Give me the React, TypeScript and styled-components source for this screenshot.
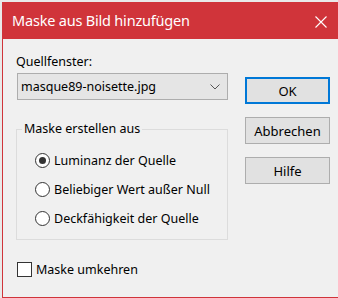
import { useState } from 'react';
import styled, { createGlobalStyle } from 'styled-components';

const GlobalStyle = createGlobalStyle`
  html, body {
    margin: 0;
    padding: 0;
    background: #e9e9e9;
  }
  body {
    font-family: 'Noto Sans', 'Liberation Sans', sans-serif;
    font-size: 12.5px;
    color: #000000;
  }
`;

const options = ['Luminanz der Quelle', 'Beliebiger Wert außer Null', 'Deckfähigkeit der Quelle'];

const App = () => {
  const [selected, setSelected] = useState(0);
  const [inverted, setInverted] = useState(false);

  return (
    <>
      <GlobalStyle />
      <Window>
        <TitleBar>
          <Title>Maske aus Bild hinzufügen</Title>
          <CloseButton aria-label="Schließen">
            <svg width="12" height="12" viewBox="0 0 12 12">
              <path d="M0.5 0.5 L11.5 11.5 M11.5 0.5 L0.5 11.5" stroke="#ffffff" strokeWidth="1.1" />
            </svg>
          </CloseButton>
        </TitleBar>
        <Body>
          <Main>
            <LeftColumn>
              <Label>Quellfenster:</Label>
              <Select>
                <span>masque89-noisette.jpg</span>
                <svg width="10" height="6" viewBox="0 0 10 6">
                  <path d="M0.5 0.5 L5 5 L9.5 0.5" stroke="#555555" fill="none" strokeWidth="1" />
                </svg>
              </Select>
              <GroupBox>
                <Legend>Maske erstellen aus</Legend>
                {options.map((label, i) => (
                  <RadioRow key={label} onClick={() => setSelected(i)}>
                    <RadioCircle $checked={selected === i} />
                    <span>{label}</span>
                  </RadioRow>
                ))}
              </GroupBox>
            </LeftColumn>
            <ButtonColumn>
              <DialogButton $primary>OK</DialogButton>
              <DialogButton>Abbrechen</DialogButton>
              <DialogButton>Hilfe</DialogButton>
            </ButtonColumn>
          </Main>
          <CheckRow onClick={() => setInverted(!inverted)}>
            <CheckBox $checked={inverted} />
            <span>Maske umkehren</span>
          </CheckRow>
        </Body>
      </Window>
    </>
  );
};

const Window = styled.div`
  margin: 2px 0 0 2px;
  height: 296px;
  box-sizing: border-box;
  border-left: 1px solid #d0343a;
  border-bottom: 1px solid #d0343a;
  background: #f0f0f0;
  display: flex;
  flex-direction: column;
`;

const TitleBar = styled.div`
  height: 37px;
  background: #d0343a;
  display: flex;
  align-items: center;
  justify-content: space-between;
  padding: 0 11px 0 9px;
`;

const Title = styled.div`
  font-size: 14.5px;
  letter-spacing: -0.2px;
  color: #ffffff;
  padding-bottom: 1px;
`;

const CloseButton = styled.div`
  width: 12px;
  height: 12px;
  display: flex;
  margin-top: 2px;
`;

const Body = styled.div`
  padding: 0 0 0 13px;
  display: flex;
  flex-direction: column;
`;

const Main = styled.div`
  display: flex;
  gap: 17px;
`;

const LeftColumn = styled.div`
  width: 212px;
  display: flex;
  flex-direction: column;
  padding-top: 14px;
`;

const Label = styled.div`
  height: 17px;
  line-height: 17px;
`;

const Select = styled.div`
  margin-top: 3px;
  margin-left: 1px;
  height: 27px;
  box-sizing: border-box;
  border: 1px solid #adadad;
  background: #e5e5e5;
  display: flex;
  align-items: center;
  justify-content: space-between;
  padding: 0 7px 0 3px;
`;

const GroupBox = styled.div`
  position: relative;
  margin-top: 29px;
  height: 111px;
  box-sizing: border-box;
  border: 1px solid #dcdcdc;
  padding: 16px 0 0 18px;
  display: flex;
  flex-direction: column;
`;

const Legend = styled.div`
  position: absolute;
  top: -10px;
  left: 5px;
  padding: 0 2px;
  background: #f0f0f0;
  line-height: 18px;
`;

const RadioRow = styled.div`
  height: 29px;
  display: flex;
  align-items: center;
  gap: 4px;
`;

const RadioCircle = styled.span<{ $checked: boolean }>`
  width: 15px;
  height: 15px;
  box-sizing: border-box;
  border: 1px solid #333333;
  border-radius: 50%;
  background: #ffffff;
  display: flex;
  align-items: center;
  justify-content: center;

  &::after {
    content: '';
    width: 7px;
    height: 7px;
    border-radius: 50%;
    background: ${({ $checked }) => ($checked ? '#333333' : 'transparent')};
  }
`;

const ButtonColumn = styled.div`
  width: 85px;
  display: flex;
  flex-direction: column;
  gap: 13px;
  padding-top: 38px;
`;

const DialogButton = styled.div<{ $primary?: boolean }>`
  height: 27px;
  box-sizing: border-box;
  border: ${({ $primary }) => ($primary ? '2px solid #0078d7' : '1px solid #adadad')};
  background: #e1e1e1;
  display: flex;
  align-items: center;
  justify-content: center;
  font-size: 13px;
`;

const CheckRow = styled.div`
  margin-top: 22px;
  margin-left: 1px;
  height: 15px;
  display: flex;
  align-items: center;
  gap: 4px;
`;

const CheckBox = styled.span<{ $checked: boolean }>`
  width: 15px;
  height: 15px;
  box-sizing: border-box;
  border: 1px solid #333333;
  background: #ffffff;
`;

export default App;
